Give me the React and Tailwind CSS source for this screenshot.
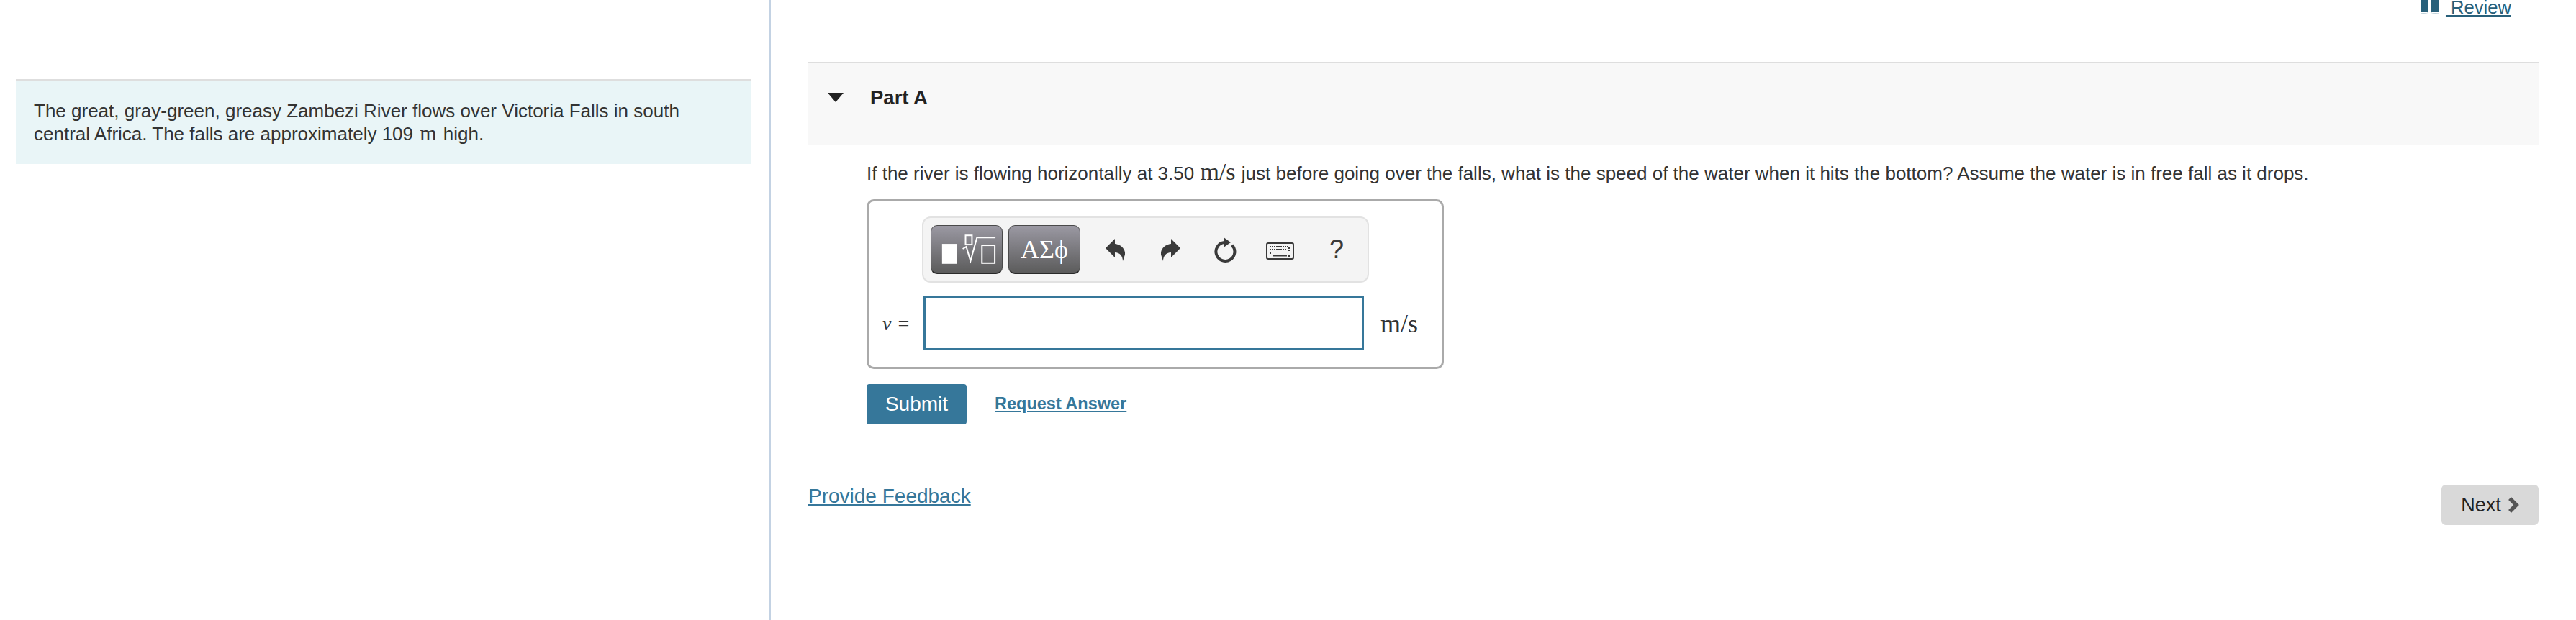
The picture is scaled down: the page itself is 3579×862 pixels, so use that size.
const SANS = "font-['Liberation_Sans',Arial,sans-serif]";
const MATH = "font-['Liberation_Serif',serif]";

function BookIcon() {
  return (
    <svg className="w-[25px] h-[20px]" viewBox="0 0 25 20">
      <path fill="#28607a" d="M0 0h11v17.5q-5-1.500-11-.5zM14 0h11v17q-6-1-11 .5z" />
      <path fill="#a9c1cd" d="M0 18.500q6-1 12.500 1 6.500-2 12.500-1v1.500H0z" />
    </svg>
  );
}

function TemplateIcon() {
  return (
    <svg className="w-[99px] h-[68px]" viewBox="0 0 99 68">
      <rect x="15" y="26" width="21" height="28" fill="#fff" />
      <g fill="none" stroke="#fff" strokeWidth="2">
        <rect x="48" y="14" width="9" height="13" />
        <path d="M44 33l5-3 6 20 9-33h26" />
        <rect x="71" y="28" width="18" height="25" />
      </g>
    </svg>
  );
}

function UndoIcon({ className }) {
  return (
    <svg className={`w-[27px] h-[31px] ${className}`} viewBox="0 0 27 31">
      <path fill="#3a3a3a" d="M0 13L13 0v7c9 1 15 8 14 15l-3 9c0-7-4-12-11-12v7z" />
    </svg>
  );
}

function ResetIcon() {
  return (
    <svg className="w-[33px] h-[37px]" viewBox="0 0 33 37">
      <path d="M25.700 11.800a13 13 0 1 1-10.700-3.800" fill="none" stroke="#3a3a3a" strokeWidth="4" />
      <path d="M14 1l10 7-10 7z" fill="#3a3a3a" />
    </svg>
  );
}

function KeyboardIcon() {
  return (
    <svg className="w-[39px] h-[24px]" viewBox="0 0 39 24">
      <rect x="1" y="1" width="37" height="22" rx="2" fill="#f4f4f4" stroke="#3a3a3a" strokeWidth="2" />
      <path
        d="M5 6h27M5 10h24M5 15h3M31 19h3M32 7v7"
        fill="none"
        stroke="#3a3a3a"
        strokeWidth="2"
        strokeDasharray="2 1"
      />
      <path d="M10 18.500h19" stroke="#3a3a3a" strokeWidth="2" />
    </svg>
  );
}

function ToolButton({ children }) {
  return (
    <button className="w-[100px] h-[68px] rounded-[9px] flex items-center justify-center border border-[#4a4a4a] border-b-2 border-b-[#2a2a2a] bg-gradient-to-b from-[#9b99a3] to-[#5c5c5c]">
      {children}
    </button>
  );
}

export default function App() {
  return (
    <div className={`flex w-[3579px] h-[862px] overflow-hidden bg-white text-[#333] ${SANS}`}>
      {/* intro column */}
      <div className="w-[1071px] h-full shrink-0 border-r-[3px] border-[#c3d2e3] pt-[110px] pl-[22px] pr-[25px]">
        <div className="border-t-2 border-[#dedede] bg-[#e9f5f7] h-[118px] pl-[25px] pr-[60px] pt-[26px] text-[26px] leading-[32px]">
          The great, gray-green, greasy Zambezi River flows over Victoria Falls in south central Africa. The falls are
          approximately 109 <span className={`mx-[2px] text-[30px] leading-none ${MATH}`}>m</span> high.
        </div>
      </div>

      {/* part column */}
      <div className="flex-1 pl-[52px] pr-[52px]">
        <div className="flex justify-end items-start h-[90px] -mt-[4px] pr-[38px]">
          <a className="flex items-start text-[#28607a] text-[25.6px] leading-[28px]">
            <span className="mt-[4px] mr-[10px]">
              <BookIcon />
            </span>
            <span className="underline whitespace-pre"> Review</span>
          </a>
        </div>

        <div className="flex items-start h-[115px] border-t-2 border-[#dedede] bg-[#f8f8f8] pt-[32px] pl-[27px]">
          <svg className="w-[22px] h-[13px] mt-[9px]" viewBox="0 0 22 13">
            <path d="M0 0h22L11 13z" fill="#222" />
          </svg>
          <h2 className="ml-[37px] text-[27.500px] leading-[32px] font-bold text-[#222]">Part A</h2>
        </div>

        <div className="pl-[81px]">
          <p className="mt-[21px] text-[26px] leading-[32px] whitespace-nowrap">
            If the river is flowing horizontally at 3.50{" "}
            <span className={`mx-[1px] text-[34px] leading-none ${MATH}`}>m/s</span> just before going over the falls,
            what is the speed of the water when it hits the bottom? Assume the water is in free fall as it drops.
          </p>

          <div className="mt-[20px] w-[802px] h-[236px] rounded-[10px] border-[3px] border-[#aaaaaa] pt-[21px]">
            <div className="ml-[74px] w-[621px] h-[92px] rounded-[12px] border-2 border-[#e2e2e2] bg-[#f4f4f4] flex items-center pl-[10px]">
              <ToolButton>
                <TemplateIcon />
              </ToolButton>
              <div className="ml-[8px]">
                <ToolButton>
                  <span className={`text-white text-[36px] leading-none ${MATH}`}>ΑΣϕ</span>
                </ToolButton>
              </div>
              <UndoIcon className="ml-[35px]" />
              <UndoIcon className="ml-[50px] -scale-x-100" />
              <div className="ml-[46px]">
                <ResetIcon />
              </div>
              <div className="ml-[40px] mt-[4px]">
                <KeyboardIcon />
              </div>
              <span className="ml-[49px] text-[36px] leading-none text-[#3a3a3a]">?</span>
            </div>

            <div className="flex items-center mt-[19px] h-[75px]">
              <span className={`w-[76px] pl-[19px] text-[28px] whitespace-nowrap ${MATH}`}>
                <i>v</i>
                <span className="ml-[9px]">=</span>
              </span>
              <div className="w-[612px] h-[75px] border-[3px] border-[#36779a] bg-white" />
              <span className={`ml-[23px] text-[36px] ${MATH}`}>m/s</span>
            </div>
          </div>

          <div className="flex items-center mt-[21px]">
            <button className="w-[139px] h-[56px] rounded-[4px] bg-[#36779a] text-white text-[28px]">Submit</button>
            <a className="ml-[39px] text-[23.500px] font-bold text-[#36779a] underline">Request Answer</a>
          </div>
        </div>

        <div className="flex justify-between items-start mt-[84px]">
          <a className="text-[28px] leading-[32px] text-[#36779a] underline">Provide Feedback</a>
          <button className="w-[135px] h-[56px] rounded-[6px] bg-[#d9d9d9] text-[#222] text-[27px] flex items-center justify-center gap-[9px]">
            Next
            <svg className="w-[16px] h-[24px]" viewBox="0 0 16 24">
              <path d="M3 3l9 9-9 9" fill="none" stroke="#555" strokeWidth="5.500" />
            </svg>
          </button>
        </div>
      </div>
    </div>
  );
}
